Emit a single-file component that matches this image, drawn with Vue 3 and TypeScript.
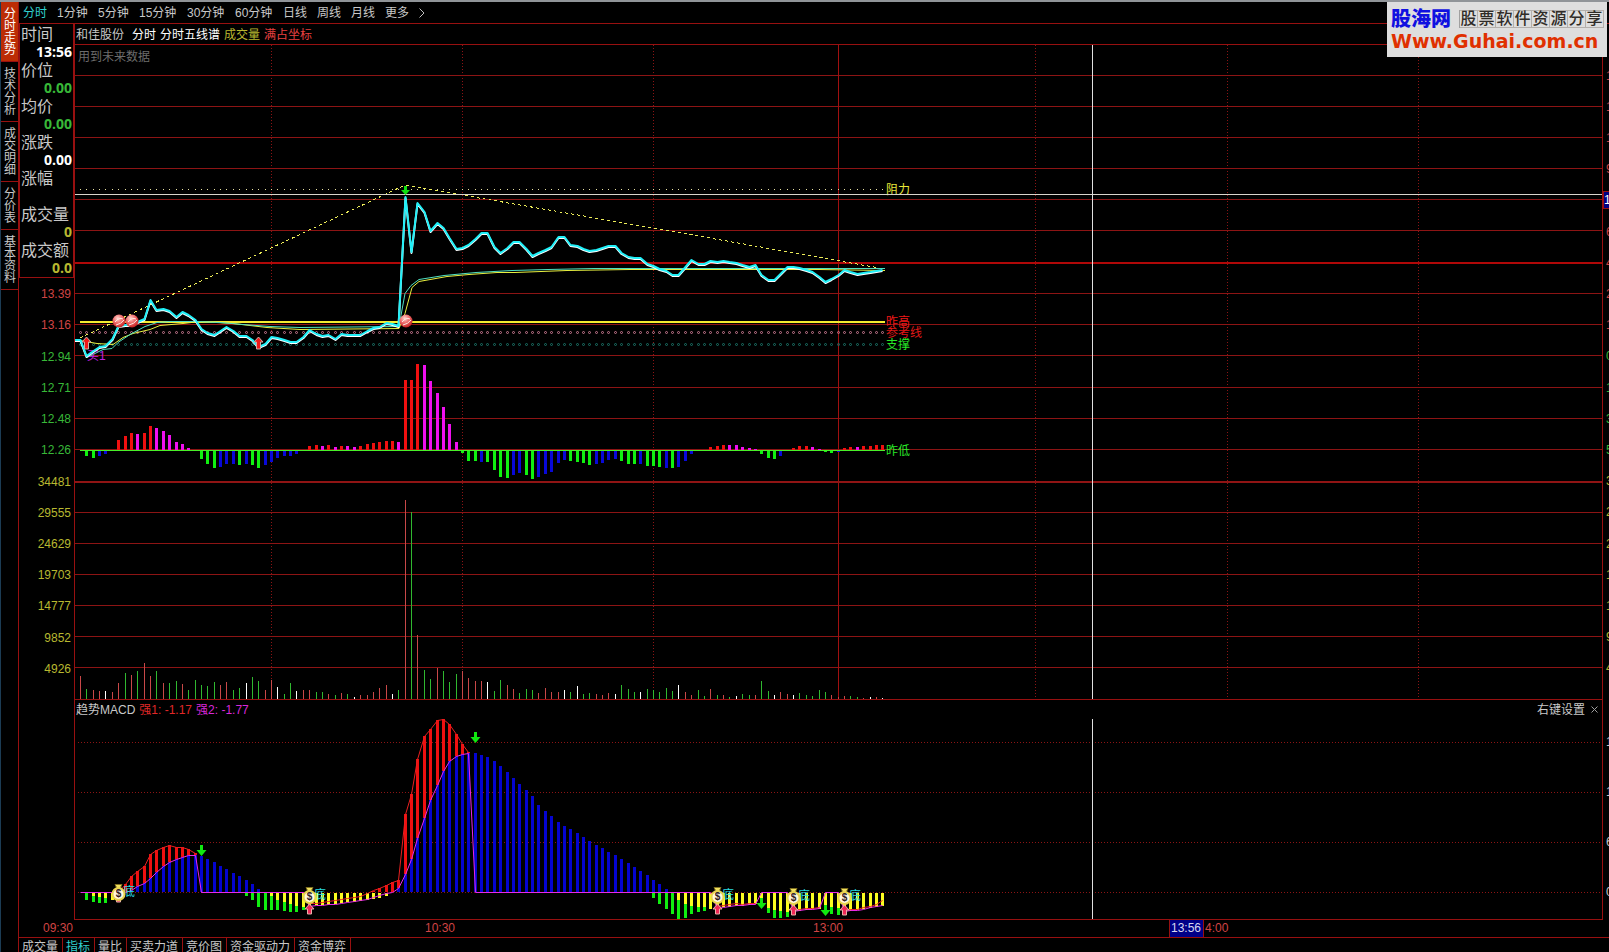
<script setup lang="ts">
interface Tone { c: string; v: number }

const sideTabs = ['分时走势', '技术分析', '成交明细', '分价表', '基本资料']
const periods = [
  { t: '分时', w: 'w2' }, { t: '1分钟', w: 'w3' }, { t: '5分钟', w: 'w3' },
  { t: '15分钟', w: 'w4' }, { t: '30分钟', w: 'w4' }, { t: '60分钟', w: 'w4' },
  { t: '日线', w: 'w2' }, { t: '周线', w: 'w2' }, { t: '月线', w: 'w2' }, { t: '更多', w: 'w2' },
]
const quote = [
  { k: '时间', v: '13:56', c: 'white' }, { k: '价位', v: '0.00', c: 'green' },
  { k: '均价', v: '0.00', c: 'green' }, { k: '涨跌', v: '0.00', c: 'white' },
  { k: '涨幅', v: '', c: 'white' }, { k: '成交量', v: '0', c: 'olive' },
  { k: '成交额', v: '0.0', c: 'olive' },
]
const leftAxis = [
  { t: '13.39', c: 'red' }, { t: '13.16', c: 'red' }, { t: '12.94', c: 'green' },
  { t: '12.71', c: 'green' }, { t: '12.48', c: 'green' }, { t: '12.26', c: 'green' },
  ...['34481', '29555', '24629', '19703', '14777', '9852', '4926'].map(t => ({ t, c: 'olive' })),
]
const rightAxis = [
  ...['1', '1', '1', '9', '1', '6', '4', '2', '1'].map(t => ({ t, c: 'red' })),
  ...['0', '1', '3', '5'].map(t => ({ t, c: 'green' })),
  ...['3', '2', '2', '1', '1', '9', '4'].map(t => ({ t, c: 'olive' })),
]
const subAxis = ['1', '1', '6', '0']
const bottomTabs = ['成交量', '指标', '量比', '买卖力道', '竞价图', '资金驱动力', '资金博弈']

const gridY = [30, 61, 92, 123, 154, 185, 248, 279, 310, 342, 373, 404, 467, 498, 529, 560, 591, 622]
const gridX = [196, 387, 578, 960, 1152, 1343]
const subGridY = [24, 74, 124, 174]

const STEP = 6.367
const X = (i: number) => Math.round(5 + STEP * i)
const parse = (s: string): Tone[] =>
  s.trim().split(/\s+/).map(p => ({ c: p[0], v: Number(p.slice(1)) }))
const colors: Record<string, string> = {
  r: '#f01010', m: '#f010f0', g: '#10f010', b: '#0808d8', w: '#ffffff',
}
const volColors: Record<string, string> = { r: '#c84848', g: '#30b830', w: '#ffffff' }

const volume = parse(`r23 g10 r9 r8 w8 r7 r16 g26 r24 g28 r36 r23 g28 r16 g16 g18 r15 g9 g19 g14
 g13 g17 r14 r17 g9 g11 w16 g22 g18 r9 r19 w12 g5 g16 w8 r9 r9 g7 g7 r5 g4 r6 g5 w2 r4 r4 r7 r11 r14 w5
 g9 r199 g187 r64 g29 g20 r31 g28 g17 g25 r28 r21 r18 r18 w17 g8 g19 r14 r10 g6 g10 g9 r6 r11 r7 r7 w9 g7
 w13 g5 g6 r5 r4 r6 w5 g14 g10 g7 w7 g10 g9 g7 g11 g8 w14 r7 r4 g9 g3 r10 g4 r4 g2 w3 g5 g4 r4 g18 g8 w4
 r7 r5 w4 g6 g4 g3 g9 g7 r4 r2 r3 g3 g2 r1 w2 r2 w1`)

const momentum = parse(`g0 g-6 g-8 b-6 b-4 b0 r10 r14 r17 m16 r17 r24 m22 m19 m15 m8 m6 m2 g-1 g-9
 g-14 g-18 b-17 b-14 b-14 g-15 b-14 g-15 g-18 b-15 b-12 b-8 b-6 b-6 b-4 b0 r4 r5 m4 r5 m3 r4 m4 m3 r4 r6
 r7 r8 r9 r9 m8 r70 r70 r86 m85 m69 m57 m43 m26 m8 g-3 g-11 g-11 b-12 g-12 g-20 g-27 g-28 b-25 b-23 g-25
 g-29 b-27 b-24 b-22 b-13 b-10 g-11 g-12 g-13 g-15 b-14 b-13 b-10 b-9 g-11 g-14 g-14 b-14 g-16 g-16 g-17
 b-18 g-18 b-17 b-11 b-4 b-1 g0 r3 r4 r5 m5 m5 m3 m2 m1 g-4 g-8 g-9 b-6 b-1 r2 r4 r4 m3 m1 g-2 g-3 b-2 r2
 r3 m3 r4 r4 r5 r5`)

const price = [
  340, 356, 351, 347, 346, 339, 326, 325, 325, 322, 319, 300, 310, 309, 311, 317, 312, 315, 320, 329,
  333, 335, 331, 327, 331, 336, 336, 340, 347, 344, 337, 338, 340, 342, 342, 337, 330, 334, 336, 335,
  339, 334, 335, 335, 335, 331, 328, 327, 323, 324, 326, 197, 252, 203, 212, 231, 223, 228, 238, 249,
  248, 245, 239, 233, 233, 247, 253, 248, 242, 242, 249, 256, 253, 250, 247, 237, 237, 245, 246, 249,
  251, 250, 248, 246, 246, 253, 257, 258, 258, 264, 266, 269, 271, 275, 275, 267, 260, 264, 264, 261,
  262, 261, 262, 263, 265, 267, 265, 275, 280, 280, 274, 267, 267, 268, 270, 272, 277, 282, 279, 275,
  270, 272, 274, 273, 272, 271, 270,
]
const pricePts = (dy: number) =>
  '0,' + (340 - 45 + dy) + ' ' + price.map((v, i) => `${X(i) + 0.5},${v - 45 + dy}`).join(' ')

const run = (from: number, s: string) =>
  s.trim().split(/\s+/).map((v, k) => ({ i: from + k, v: Number(v) }))
const reds = [
  ...run(7, '8 16 21 26 38 42 45 47 45 45 43 39'),
  ...run(46, '1 4 7 10 12 78 98 133 156 163 172 173 168 158 148 140'),
]
const blues = [
  ...run(8, '2 6 9 14 20 26 30 33 35 37 37 36 33 30 26 23 19 16 12 8 3'),
  ...run(50, '4 18 33 54 74 92 107 121 131 136 138 139 139 137 135 131 126 120 114 108 102 96 87 81 76 70 66 63 59 55 51 47 44 40 37 33 29 25 21 17 12 8 3'),
]
const greens = [
  ...run(1, '7 9 10 10'),
  ...run(26, '3 7 14 17 17 17 18 19 19 17'),
  ...run(90, '5 11 16 21 26 25 21 19 18'),
  ...run(108, '20 25 25 24'), ...run(118, '21 22'),
]
const yellows = [
  ...run(2, '3 4 5 7 6'),
  ...run(30, '3 7 9 11 13 14 14 12 12 12 11 10 9 9 8 7 6 5 3'),
  ...run(94, '7 11 13 14 14 16 15 14 14 13 13 12 11 10 15 17 18 19 19 18 17 16 16 12 14 15 18 18 17 16 15 14 13'),
]
const line = (list: { i: number; v: number }[]) =>
  list.map(p => `${X(p.i) + 0.5},${174.5 - p.v}`).join(' ')
const redLines = [
  line(run(6, '0 8 16 21 26 38 42 45 47 45 45 43 39')),
  line(run(36, '-11 -11 -10 -9 -8 -7 -6 -5 -4 -1 2 4 7 10 12 78 98 133 156 163 172 173 168 158 148 140')),
  line(run(100, '-14 -13 -12 -11 -12 -11 -11')),
  line(run(112, '-18 -17 -16 -16 -15')),
  line(run(120, '-18 -17 -17 -15 -14 -12 -8')),
]
const magenta = line([
  { i: 0, v: 0 }, ...run(7, '0 2 6 9 14 20 26 30 33 35 37 37 0'), { i: 35, v: 0 },
  ...run(36, '-14 -13 -13 -12 -12 -11 -10 -9 -8 -7 -5 -3 -1 0 4 18 33 54 74 92 107 121 131 136 138 139 0'),
  { i: 99, v: 0 }, ...run(100, '-16 -15 -14 -13 -13 -12 -12 0'), { i: 111, v: 0 },
  ...run(112, '-19 -18 -17 -17 -16 0'), { i: 119, v: 0 }, ...run(120, '-19 -18 -18 -17 -15 -14 -13'),
])
const bags = [{ i: 6, y: 166 }, { i: 36, y: 169 }, { i: 100, y: 169 }, { i: 112, y: 170 }, { i: 120, y: 170 }]
const downs = [{ i: 19, y: 127 }, { i: 62, y: 14 }, { i: 107, y: 180 }, { i: 117, y: 187 }]
const dots = Array.from({ length: 127 }, (_, i) => i)
</script>

<template>
  <div class="app">
    <div class="strip"></div>
    <div class="frame">
      <nav class="side">
        <button v-for="(t, i) in sideTabs" :key="t" type="button" :class="{ on: i === 0 }">{{ t }}</button>
      </nav>
      <main class="main">
        <nav class="periods">
          <button v-for="(p, i) in periods" :key="p.t" type="button" :class="[p.w, { on: i === 0 }]">{{ p.t }}</button>
          <svg class="more" width="6" height="10" viewBox="0 0 6 10"><path d="M0.5 0.5L5 5L0.5 9.5" fill="none" stroke="#c0c0c0" /></svg>
        </nav>

        <div class="board">
          <aside class="left">
            <dl class="quote">
              <template v-for="q in quote" :key="q.k">
                <dt>{{ q.k }}</dt>
                <dd :class="q.c">{{ q.v }}</dd>
              </template>
            </dl>
            <ul class="scale">
              <li v-for="a in leftAxis" :key="a.t" :class="a.c">{{ a.t }}</li>
            </ul>
          </aside>

          <div class="charts">
            <header class="legend">
              <span class="name">和佳股份</span><span class="white">分时</span><span class="white">分时五线谱</span>
              <span class="olive">成交量</span><span class="bright">满占坐标</span>
            </header>
            <svg class="plot" height="654" width="100%">
              <defs>
                <radialGradient id="ball" cx="40%" cy="30%" r="75%">
                  <stop offset="0" stop-color="#ffd8d0" /><stop offset="0.45" stop-color="#f07070" /><stop offset="1" stop-color="#c01818" />
                </radialGradient>
              </defs>
              <text x="3" y="16" fill="#6c6c6c">用到未来数据</text>
              <g shape-rendering="crispEdges">
                <rect v-for="y in gridY" :key="'h' + y" x="0" :y="y" width="100%" height="1" fill="#8c1414" />
                <line v-for="x in gridX" :key="'v' + x" :x1="x + 0.5" :x2="x + 0.5" y1="0" y2="654" stroke="#8c1414" stroke-dasharray="1 2" />
                <rect x="763" y="0" width="1" height="654" fill="#a01010" />
                <rect x="0" y="217" width="100%" height="2" fill="#b00808" />
                <rect x="0" y="436" width="100%" height="2" fill="#901414" />
                <rect v-for="(b, i) in volume" :key="'q' + i" :x="X(i)" :y="654 - b.v" width="1" :height="b.v" :fill="volColors[b.c]" />
                <rect v-for="(b, i) in momentum" :key="'m' + i" :x="X(i) - 1" :y="b.v > 0 ? 405 - b.v : 405" width="3" :height="Math.abs(b.v)" :fill="colors[b.c]" />
                <rect x="5" y="405" width="805" height="1" fill="#48f028" />
                <rect v-for="i in dots" :key="'d' + i" :x="X(i)" y="144" width="1" height="1" fill="#e8e0a0" />
                <rect x="5" y="276" width="805" height="2" fill="#f4ec30" />
              </g>
              <g fill="none">
                <circle v-for="i in dots" :key="'p' + i" :cx="X(i) + 0.5" cy="287.5" r="1" stroke="#c87890" />
                <circle v-for="i in dots" :key="'t' + i" :cx="X(i) + 0.5" cy="299.5" r="1" stroke="#1c7468" />
                <polyline points="5,293 330,140 387,150 578,183 810,224" stroke="#ecec58" stroke-dasharray="3 3" shape-rendering="crispEdges" />
                <g transform="translate(0 0.5)">
                  <polyline points="5,295 22,298 38,299 48,292 58,288 75,284 85,280 108,278 125,276 158,278 192,282 225,284 324,283 330,268 337,242 344,236 372,231 394,229 422,227 440,227 492,225 555,224 744,224 810,225" stroke="#e8f040" />
                  <polyline points="5,296 12,312 28,304 37,303 43,297 55,289 70,281 82,277 95,276 122,276 145,277 168,279 195,281 225,282 324,281 326,270 330,248 336,240 344,234 369,230 401,227 437,225 473,224 519,223 810,223" stroke="#50e0c0" />
                </g>
              </g>
              <text x="12" y="315" fill="#c020e0">买1</text>
              <g fill="none" stroke-width="2" stroke-linejoin="round">
                <polyline :points="pricePts(1)" stroke="#fff" />
                <polyline :points="pricePts(0)" stroke="#20f0f8" />
              </g>
              <text x="811" y="149" fill="#e8e838">阻力</text>
              <g shape-rendering="crispEdges">
                <rect x="0" y="149" width="100%" height="1" fill="#d8d4cc" />
                <rect x="1017" y="0" width="1" height="654" fill="#e0e0e0" />
              </g>
              <g v-for="x in [44, 57, 331]" :key="'b' + x">
                <circle :cx="x" cy="276" r="6.5" fill="url(#ball)" />
                <path :d="`M${x - 4} 277Q${x} 272 ${x + 4} 274M${x - 3} 280Q${x + 2} 279 ${x + 5} 275`" fill="none" stroke="#ffe8e0" />
              </g>
              <path v-for="x in [11, 183]" :key="'u' + x" :d="`M${x + 0.5} 292l4.5 5h-2.5v7h-4v-7h-2.5z`" fill="#f01818" stroke="#c8b0a8" />
              <path d="M329 141h3v4h3l-4.5 5l-4.5-5h3z" fill="#10e010" />
              <text x="811" y="281" fill="#f01818">昨高</text>
              <text x="811" y="292" fill="#e01818">参考线</text>
              <text x="811" y="304" fill="#28e828">支撑</text>
              <text x="811" y="410" fill="#28e828">昨低</text>
            </svg>

            <header class="subhead">
              <span>趋势MACD</span><span class="strong1">强1: -1.17</span><span class="strong2">强2: -1.77</span>
              <button class="setup" type="button">右键设置</button>
              <button class="close" type="button" aria-label="关闭">
                <svg width="7" height="7" viewBox="0 0 7 7"><path d="M0.5 0.5L6.5 6.5M6.5 0.5L0.5 6.5" stroke="#a0a0a0" /></svg>
              </button>
            </header>
            <svg class="plot" height="201" width="100%">
              <g shape-rendering="crispEdges">
                <line v-for="y in subGridY" :key="y" x1="3" x2="100%" :y1="y + 0.5" :y2="y + 0.5" stroke="#8c1414" stroke-dasharray="1 2" />
                <rect v-for="b in reds" :key="'r' + b.i" :x="X(b.i) - 1" :y="174 - b.v" width="3" :height="b.v" fill="#ee1010" />
                <rect v-for="b in blues" :key="'b' + b.i" :x="X(b.i) - 1" :y="174 - b.v" width="3" :height="b.v" fill="#0404d0" />
                <rect v-for="b in greens" :key="'g' + b.i" :x="X(b.i) - 1" y="175" width="3" :height="b.v" fill="#10ee10" />
                <rect v-for="b in yellows" :key="'y' + b.i" :x="X(b.i) - 1" y="175" width="3" :height="b.v" fill="#fcfc20" />
                <rect x="1017" y="1" width="1" height="200" fill="#e0e0e0" />
              </g>
              <polyline v-for="(p, k) in redLines" :key="k" :points="p" fill="none" stroke="#e82020" />
              <polyline :points="magenta" fill="none" stroke="#e828e8" />
              <path v-for="d in downs" :key="'d' + d.i" :d="`M${X(d.i) - 1} ${d.y}h3v5h3.5l-5 6l-5-6h3.5z`" fill="#10e810" />
              <g v-for="b in bags" :key="'bag' + b.i">
                <text :x="X(b.i) + 5" :y="b.y + 12" fill="#28dce0">底</text>
                <path :d="`M${X(b.i) + 0.5} ${b.i === 6 ? 174 : b.y + 17}l4.5 5h-2.5v5h-4v-5h-2.5z`" fill="#f02858" stroke="#e8b0a8" />
                <path :d="`M${X(b.i) - 3} ${b.y + 0.5}h7l-2 4h-3z`" fill="#f0e060" stroke="#807020" />
                <circle :cx="X(b.i) + 0.5" :cy="b.y + 10" r="6" fill="#fff8e0" stroke="#e8d450" stroke-width="2" />
                <text class="dollar" :x="X(b.i) + 0.5" :y="b.y + 13" text-anchor="middle">$</text>
              </g>
            </svg>
          </div>

          <aside class="right">
            <ul class="rscale">
              <li v-for="(a, i) in rightAxis" :key="i" :class="a.c"><span :class="{ cursor: i === 4 }">{{ a.t }}</span></li>
            </ul>
            <ul class="subscale"><li v-for="(t, i) in subAxis" :key="i"><span>{{ t }}</span></li></ul>
          </aside>
        </div>

        <div class="times">
          <span class="t1">09:30</span><span class="t2">10:30</span><span class="t3">13:00</span>
          <span class="now">13:56</span><span class="t4">4:00</span>
        </div>
        <nav class="tabs">
          <button v-for="(t, i) in bottomTabs" :key="t" type="button" :class="{ on: i === 1 }">{{ t }}</button>
        </nav>
      </main>
    </div>

    <a class="brand" href="#">
      <span class="row">
        <span class="logo">股海网</span>
        <span class="cells"><span v-for="(c, i) in '股票软件资源分享'" :key="i">{{ c }}</span></span>
      </span>
      <span class="url">Www.Guhai.com.cn</span>
    </a>
  </div>
</template>

<style>
body { margin: 0; background: #000; }
</style>

<style scoped>
.app {
  position: relative;
  min-height: 100vh;
  display: flex;
  flex-direction: column;
  overflow: hidden;
  background: #000;
  color: #c8c8c8;
  font: 12px/16px "Liberation Sans", "Noto Sans CJK SC", sans-serif;
}
.app * { box-sizing: border-box; }
button { margin: 0; padding: 0; border: 0; background: none; color: inherit; font: inherit; text-align: left; white-space: nowrap; cursor: pointer; }
ul, dl, dd { margin: 0; padding: 0; list-style: none; }
svg { display: block; }
.white { color: #fff; }
.green { color: #38b838; }
.olive { color: #b8b830; }
.red { color: #d04444; }
.bright { color: #e84040; }
.strip { height: 2px; background: #909498; }
.frame { flex: 1; display: flex; }
.side {
  width: 19px;
  display: flex;
  flex-direction: column;
  border-left: 1px solid #1c3c54;
  border-right: 1px solid #981010;
}
.side button {
  padding: 6px 2px 5px 3px;
  border-bottom: 1px solid #981010;
  line-height: 12px;
  white-space: normal;
  word-break: break-all;
}
.side .on { background: #bc2c04; color: #fff; }
.main { flex: 1; min-width: 0; display: flex; flex-direction: column; }
.periods {
  height: 22px;
  display: flex;
  align-items: center;
  padding-left: 4px;
  border-bottom: 1px solid #981010;
}
.periods .w2 { width: 34px; }
.periods .w3 { width: 41px; }
.periods .w4 { width: 48px; }
.on { color: #30d0d0; }
.board { display: grid; grid-template-columns: 55px minmax(0, 1fr) 6px; }
.quote { height: 254px; padding: 1px 1px 0 1px; border: 1px solid #981010; border-top: 0; }
.quote dt { height: 18px; font-size: 16px; line-height: 20px; white-space: nowrap; }
.quote dd { height: 18px; font: bold 14px/18px "Open Sans", sans-serif; text-align: right; }
.scale { height: 406px; display: flex; flex-direction: column; }
.scale li { flex: 1; display: flex; align-items: center; justify-content: flex-end; padding: 1px 3px 0 0; }
.charts { border-left: 1px solid #981010; border-right: 1px solid #981010; }
.legend { height: 21px; display: flex; align-items: center; gap: 4px; padding: 2px 0 0 1px; border-bottom: 1px solid #981010; white-space: nowrap; }
.legend .name { margin-right: 4px; }
.plot { border-bottom: 1px solid #981010; box-sizing: content-box !important; overflow: hidden; }
.subhead { height: 18px; display: flex; align-items: center; gap: 4px; padding: 1px 0 0 1px; white-space: nowrap; }
.strong1 { color: #e02828; }
.strong2 { color: #d828d8; }
.setup { margin-left: auto; }
.close { padding: 0 4px 0 2px; }
.dollar { font: bold 10px "Liberation Sans", sans-serif; fill: #302020; }
.right { overflow: hidden; padding-top: 36px; }
.rscale { height: 624px; display: flex; flex-direction: column; }
.rscale li { flex: 1; display: flex; align-items: center; }
.rscale span, .subscale span { padding-left: 3px; }
.rscale .cursor { flex: 1; padding-left: 0; border: 1px solid #981010; background: #000080; color: #fff; }
.subscale { padding-top: 33px; }
.subscale li { height: 50px; line-height: 50px; }
.times {
  height: 18px;
  display: flex;
  border-bottom: 1px solid #981010;
  color: #d04444;
  line-height: 17px;
}
.t1 { margin-left: 24px; width: 382px; }
.t2 { width: 388px; }
.t3 { width: 356px; }
.now { width: 35px; padding-left: 1px; border: 1px solid #981010; border-width: 0 1px; background: #000088; color: #d8d8f0; }
.t4 { padding-left: 1px; }
.tabs { height: 14px; display: flex; overflow: hidden; }
.tabs button { height: 16px; padding: 1px 4px 0 3px; border-right: 1px solid #981010; }
.brand {
  position: absolute;
  top: 2px;
  right: 2px;
  width: 220px;
  height: 55px;
  padding: 6px 4px 0;
  background: #dedede;
  text-decoration: none;
  white-space: nowrap;
}
.row { display: flex; align-items: center; gap: 8px; }
.logo { color: #1010e0; font-size: 20px; font-weight: 900; line-height: 22px; }
.cells { display: flex; border-left: 1px solid #a0a0a0; }
.cells span {
  width: 18px;
  height: 18px;
  border: 1px solid #b4b0ac;
  border-left: 0;
  color: #302c28;
  font-size: 16px;
  font-weight: 500;
  line-height: 16px;
  text-align: center;
}
.url { display: block; color: #e03000; font: bold 19px/22px "DejaVu Sans", sans-serif; }
</style>
